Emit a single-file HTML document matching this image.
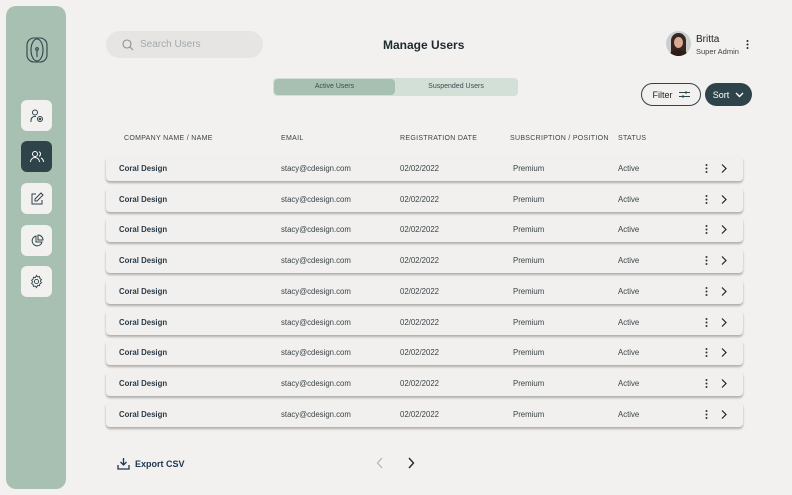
<!DOCTYPE html>
<html><head><style>
*{margin:0;padding:0;box-sizing:border-box}
body{width:792px;height:495px;background:#f2f1ef;font-family:"Liberation Sans",sans-serif;position:relative;overflow:hidden;color:#2b3a42}
.side{position:absolute;left:6px;top:6px;width:60px;height:483px;background:#a8c0b2;border-radius:10px}
.nb{position:absolute;left:21px;width:31px;height:31px;background:#f2f1ef;border-radius:6px;display:flex;align-items:center;justify-content:center}
.nb.act{background:#2f434b}
.search{position:absolute;left:106px;top:31px;width:157px;height:27px;background:#e6e5e3;border-radius:14px;font-size:10px;color:#a4a8ab;display:flex;align-items:center;padding-left:16px}
.title{position:absolute;left:383px;top:38px;font-size:12px;font-weight:bold;color:#1f2a30}
.tabs{position:absolute;left:273px;top:78px;width:245px;height:18px;background:#d3e0d8;border-radius:4px}
.tab1{position:absolute;left:1px;top:1px;width:121px;height:16px;background:#a8c0b2;border-radius:4px;font-size:7px;text-align:center;line-height:16px;color:#3b4a50}
.tab2{position:absolute;left:122px;top:1px;width:122px;height:16px;font-size:7px;text-align:center;line-height:16px;color:#3b4a50}
.btn{position:absolute;top:83px;height:23px;border-radius:12px;font-size:9px;display:flex;align-items:center;justify-content:center;gap:6px}
.hd{position:absolute;top:135px;font-size:7px;letter-spacing:.3px;color:#3b4448}
.row{position:absolute;left:106px;width:637px;height:25px;background:#f1f0ee;border-radius:4px;box-shadow:0 2px 2px rgba(0,0,0,.28);font-size:7.8px;color:#3a4448}
.row span{position:absolute;top:8px}
.row b{position:absolute;left:13px;top:8px;color:#2b3a48}
.row svg{position:absolute;top:8px}
</style></head><body>
<div class="side"></div>
<svg style="position:absolute;left:26px;top:37px" width="22" height="26" viewBox="0 0 22 26" fill="none" stroke="#2f434b" stroke-width="1.1"><rect x="1" y="1" width="20" height="24" rx="7"/><ellipse cx="11" cy="13" rx="6" ry="11"/><line x1="11" y1="13" x2="11" y2="20"/><circle cx="11" cy="12" r="1.3"/></svg>
<div class="nb" style="top:100px"><svg width="16" height="16" viewBox="0 0 16 16" fill="none" stroke="#2f434b" stroke-width="1"><circle cx="6" cy="4.5" r="2.5"/><path d="M2 14v-2a4 4 0 0 1 5-3.5"/><circle cx="11" cy="11" r="2.5"/><circle cx="11" cy="11" r=".8"/></svg></div>
<div class="nb act" style="top:141px"><svg width="16" height="16" viewBox="0 0 16 16" fill="none" stroke="#fff" stroke-width="1"><circle cx="6" cy="5" r="2.5"/><path d="M1.5 13a4.5 4.5 0 0 1 9 0"/><path d="M10 2.7a2.5 2.5 0 0 1 0 4.6M12 9a4.5 4.5 0 0 1 2.5 4"/></svg></div>
<div class="nb" style="top:183px"><svg width="14" height="14" viewBox="0 0 14 14" fill="none" stroke="#2f434b" stroke-width="1"><path d="M6 2H2v10h10V8"/><path d="M11 1l2 2-6 6H5V7z"/></svg></div>
<div class="nb" style="top:225px"><svg width="14" height="14" viewBox="0 0 14 14" fill="none" stroke="#2f434b" stroke-width="1"><path d="M6 2a5 5 0 1 0 6 6H6z"/><path d="M8 1a5 5 0 0 1 5 5H8z"/></svg></div>
<div class="nb" style="top:266px"><svg width="15" height="15" viewBox="0 0 16 16" fill="none" stroke="#2f434b" stroke-width="1"><circle cx="8" cy="8" r="2.2"/><path d="M8 1.5l1.2 1.6 2-.4.4 2 1.6 1.2-1 1.7 1 1.8-1.6 1.1-.4 2-2-.4L8 14.5l-1.2-1.6-2 .4-.4-2-1.6-1.2 1-1.8-1-1.7 1.6-1.2.4-2 2 .4z"/></svg></div>
<div class="search"><svg width="12" height="12" viewBox="0 0 12 12" fill="none" stroke="#8a9095" stroke-width="1.1" style="margin-right:6px"><circle cx="5" cy="5" r="4"/><path d="M8 8l3 3"/></svg>Search Users</div>
<div class="title">Manage Users</div>
<div style="position:absolute;left:666px;top:31px;width:25px;height:25px;border-radius:50%;background:#c9cfd0;overflow:hidden"><div style="position:absolute;left:5px;top:2px;width:15px;height:24px;border-radius:8px 8px 2px 2px;background:#3a2620"></div><div style="position:absolute;left:8px;top:6px;width:9px;height:11px;border-radius:50%;background:#d9ab92"></div><div style="position:absolute;left:4px;top:19px;width:17px;height:8px;border-radius:50% 50% 0 0;background:#2a1c18"></div></div>
<div style="position:absolute;left:696px;top:34px;font-size:10px;color:#222">Britta</div>
<div style="position:absolute;left:696px;top:47px;font-size:7.5px;color:#444">Super Admin</div>
<svg style="position:absolute;left:746px;top:40px" width="3" height="9"><circle cx="1.5" cy="1" r="1" fill="#222"/><circle cx="1.5" cy="4.5" r="1" fill="#222"/><circle cx="1.5" cy="8" r="1" fill="#222"/></svg>
<div class="tabs"><div class="tab1">Active Users</div><div class="tab2">Suspended Users</div></div>
<div class="btn" style="left:641px;width:60px;border:1px solid #2f434b;color:#222">Filter <svg width="11" height="9" viewBox="0 0 11 9" stroke="#2f434b" stroke-width="1" fill="none"><path d="M0 2.5h11M0 6.5h11"/><path d="M7 1v3M4 5v3"/></svg></div>
<div class="btn" style="left:705px;width:47px;background:#2f434b;color:#fff">Sort <svg width="9" height="6" viewBox="0 0 9 6" stroke="#fff" stroke-width="1.4" fill="none"><path d="M1 1l3.5 3.5L8 1"/></svg></div>
<div class="hd" style="left:124px">COMPANY NAME / NAME</div>
<div class="hd" style="left:281px">EMAIL</div>
<div class="hd" style="left:400px">REGISTRATION DATE</div>
<div class="hd" style="left:510px">SUBSCRIPTION / POSITION</div>
<div class="hd" style="left:618px">STATUS</div>
<div id="rows"></div>
<div class="row" style="top:156px"><b>Coral Design</b><span style="left:175px">stacy@cdesign.com</span><span style="left:294px">02/02/2022</span><span style="left:407px">Premium</span><span style="left:512px">Active</span><svg style="left:599px" width="3" height="9"><circle cx="1.5" cy="1" r="1" fill="#333"/><circle cx="1.5" cy="4.5" r="1" fill="#333"/><circle cx="1.5" cy="8" r="1" fill="#333"/></svg><svg style="left:615px" width="6" height="9" fill="none" stroke="#222" stroke-width="1.2"><path d="M1 .5l4 4-4 4"/></svg></div>
<div class="row" style="top:187px"><b>Coral Design</b><span style="left:175px">stacy@cdesign.com</span><span style="left:294px">02/02/2022</span><span style="left:407px">Premium</span><span style="left:512px">Active</span><svg style="left:599px" width="3" height="9"><circle cx="1.5" cy="1" r="1" fill="#333"/><circle cx="1.5" cy="4.5" r="1" fill="#333"/><circle cx="1.5" cy="8" r="1" fill="#333"/></svg><svg style="left:615px" width="6" height="9" fill="none" stroke="#222" stroke-width="1.2"><path d="M1 .5l4 4-4 4"/></svg></div>
<div class="row" style="top:217px"><b>Coral Design</b><span style="left:175px">stacy@cdesign.com</span><span style="left:294px">02/02/2022</span><span style="left:407px">Premium</span><span style="left:512px">Active</span><svg style="left:599px" width="3" height="9"><circle cx="1.5" cy="1" r="1" fill="#333"/><circle cx="1.5" cy="4.5" r="1" fill="#333"/><circle cx="1.5" cy="8" r="1" fill="#333"/></svg><svg style="left:615px" width="6" height="9" fill="none" stroke="#222" stroke-width="1.2"><path d="M1 .5l4 4-4 4"/></svg></div>
<div class="row" style="top:248px"><b>Coral Design</b><span style="left:175px">stacy@cdesign.com</span><span style="left:294px">02/02/2022</span><span style="left:407px">Premium</span><span style="left:512px">Active</span><svg style="left:599px" width="3" height="9"><circle cx="1.5" cy="1" r="1" fill="#333"/><circle cx="1.5" cy="4.5" r="1" fill="#333"/><circle cx="1.5" cy="8" r="1" fill="#333"/></svg><svg style="left:615px" width="6" height="9" fill="none" stroke="#222" stroke-width="1.2"><path d="M1 .5l4 4-4 4"/></svg></div>
<div class="row" style="top:279px"><b>Coral Design</b><span style="left:175px">stacy@cdesign.com</span><span style="left:294px">02/02/2022</span><span style="left:407px">Premium</span><span style="left:512px">Active</span><svg style="left:599px" width="3" height="9"><circle cx="1.5" cy="1" r="1" fill="#333"/><circle cx="1.5" cy="4.5" r="1" fill="#333"/><circle cx="1.5" cy="8" r="1" fill="#333"/></svg><svg style="left:615px" width="6" height="9" fill="none" stroke="#222" stroke-width="1.2"><path d="M1 .5l4 4-4 4"/></svg></div>
<div class="row" style="top:310px"><b>Coral Design</b><span style="left:175px">stacy@cdesign.com</span><span style="left:294px">02/02/2022</span><span style="left:407px">Premium</span><span style="left:512px">Active</span><svg style="left:599px" width="3" height="9"><circle cx="1.5" cy="1" r="1" fill="#333"/><circle cx="1.5" cy="4.5" r="1" fill="#333"/><circle cx="1.5" cy="8" r="1" fill="#333"/></svg><svg style="left:615px" width="6" height="9" fill="none" stroke="#222" stroke-width="1.2"><path d="M1 .5l4 4-4 4"/></svg></div>
<div class="row" style="top:340px"><b>Coral Design</b><span style="left:175px">stacy@cdesign.com</span><span style="left:294px">02/02/2022</span><span style="left:407px">Premium</span><span style="left:512px">Active</span><svg style="left:599px" width="3" height="9"><circle cx="1.5" cy="1" r="1" fill="#333"/><circle cx="1.5" cy="4.5" r="1" fill="#333"/><circle cx="1.5" cy="8" r="1" fill="#333"/></svg><svg style="left:615px" width="6" height="9" fill="none" stroke="#222" stroke-width="1.2"><path d="M1 .5l4 4-4 4"/></svg></div>
<div class="row" style="top:371px"><b>Coral Design</b><span style="left:175px">stacy@cdesign.com</span><span style="left:294px">02/02/2022</span><span style="left:407px">Premium</span><span style="left:512px">Active</span><svg style="left:599px" width="3" height="9"><circle cx="1.5" cy="1" r="1" fill="#333"/><circle cx="1.5" cy="4.5" r="1" fill="#333"/><circle cx="1.5" cy="8" r="1" fill="#333"/></svg><svg style="left:615px" width="6" height="9" fill="none" stroke="#222" stroke-width="1.2"><path d="M1 .5l4 4-4 4"/></svg></div>
<div class="row" style="top:402px"><b>Coral Design</b><span style="left:175px">stacy@cdesign.com</span><span style="left:294px">02/02/2022</span><span style="left:407px">Premium</span><span style="left:512px">Active</span><svg style="left:599px" width="3" height="9"><circle cx="1.5" cy="1" r="1" fill="#333"/><circle cx="1.5" cy="4.5" r="1" fill="#333"/><circle cx="1.5" cy="8" r="1" fill="#333"/></svg><svg style="left:615px" width="6" height="9" fill="none" stroke="#222" stroke-width="1.2"><path d="M1 .5l4 4-4 4"/></svg></div>
<svg style="position:absolute;left:117px;top:457px" width="13" height="13" viewBox="0 0 13 13" fill="none" stroke="#1f3550" stroke-width="1.3"><path d="M6.5 1v7M3.5 5l3 3 3-3M1 8v4h11V8"/></svg>
<div style="position:absolute;left:135px;top:459px;font-size:9px;font-weight:bold;color:#1f3550">Export CSV</div>
<svg style="position:absolute;left:376px;top:457px" width="8" height="12" viewBox="0 0 8 12" fill="none" stroke="#b5b8ba" stroke-width="1.3"><path d="M6 1L1.5 6 6 11"/></svg>
<svg style="position:absolute;left:407px;top:457px" width="8" height="12" viewBox="0 0 8 12" fill="none" stroke="#1f2a30" stroke-width="1.4"><path d="M2 1l4.5 5L2 11"/></svg>
</body></html>
